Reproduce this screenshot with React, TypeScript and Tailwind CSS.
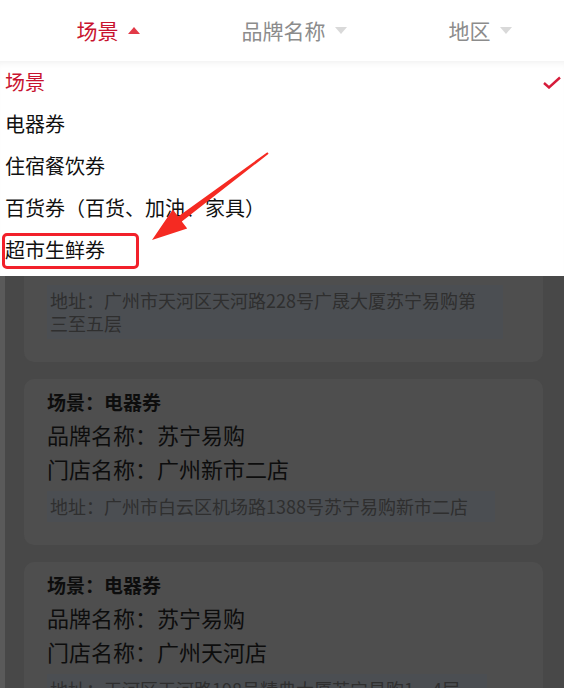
import React from 'react';

interface Store {
  scene: string;
  brand: string;
  store: string;
  address: string;
}

const stores: Store[] = [
  {
    scene: '电器券',
    brand: '苏宁易购',
    store: '广州天河店',
    address: '地址：广州市天河区天河路228号广晟大厦苏宁易购第三至五层',
  },
  {
    scene: '电器券',
    brand: '苏宁易购',
    store: '广州新市二店',
    address: '地址：广州市白云区机场路1388号苏宁易购新市二店',
  },
  {
    scene: '电器券',
    brand: '苏宁易购',
    store: '广州天河店',
    address: '地址：天河区天河路198号精典大厦苏宁易购1、4层',
  },
];

const options = ['场景', '电器券', '住宿餐饮券', '百货券（百货、加油、家具）', '超市生鲜券'];

function Caret({ up }: { up?: boolean }) {
  return (
    <svg width="12" height="7" viewBox="0 0 12 7" className="ml-[9px]">
      {up ? (
        <polygon points="6,0 12,7 0,7" fill="#e23a47" />
      ) : (
        <polygon points="0,0 12,0 6,7" fill="#d9d9d9" />
      )}
    </svg>
  );
}

export default function App() {
  return (
    <div
      className="relative w-[564px] h-[688px] overflow-hidden bg-[#484848]"
      style={{ fontFamily: '"Noto Sans CJK SC", "Noto Sans", sans-serif' }}
    >
      {/* 顶部筛选栏 */}
      <div className="relative z-20 h-[61px] bg-white grid grid-cols-[186px_186px_186px] pl-[15px] items-center">
        <div className="flex items-center justify-center text-[21px] text-[#c8132f]">
          场景
          <Caret up />
        </div>
        <div className="flex items-center justify-center text-[21px] text-[#8c8c8c]">
          品牌名称
          <Caret />
        </div>
        <div className="flex items-center justify-center text-[21px] text-[#8c8c8c]">
          地区
          <Caret />
        </div>
      </div>

      {/* 门店列表（被遮罩） */}
      <div className="border-l-[5px] border-[#5a5a5a] h-full pt-[112px] pl-[19px] pr-[21px] flex flex-col gap-[17px]">
        {stores.map((s, i) => (
          <div key={i} className="bg-[#4e4e4e] rounded-[10px] pt-[11px] pb-[23px] pl-[23px] pr-[20px] text-[#0d0d0d]">
            <div className="text-[19px] leading-[24px] font-bold">场景：{s.scene}</div>
            <div className="mt-[3px] text-[22px] leading-[34px]">品牌名称：{s.brand}</div>
            <div className="text-[22px] leading-[34px]">门店名称：{s.store}</div>
            <div className="mt-[6px] w-fit max-w-[456px] bg-[#4b4e52] pl-[3px] pr-[27px] py-[4px] text-[18px] leading-[23px] text-[#2f2f2f]">
              {s.address}
            </div>
          </div>
        ))}
      </div>

      {/* 下拉菜单 */}
      <div className="absolute z-10 left-0 right-0 top-[61px] bg-white pb-[5px] shadow-[inset_0_6px_6px_-4px_rgba(0,0,0,0.06)]">
        {options.map((o, i) => (
          <div
            key={o}
            className={`h-[42px] flex items-center justify-between pl-[5px] pr-[3px] text-[20px] ${
              i === 0 ? 'text-[#c8132f]' : 'text-[#111]'
            }`}
          >
            <span>{o}</span>
            {i === 0 && (
              <svg width="18" height="13" viewBox="0 0 18 13">
                <polyline points="1,7 6,11.5 17,1.5" fill="none" stroke="#d61c3a" strokeWidth="2.4" />
              </svg>
            )}
          </div>
        ))}
      </div>

      {/* 标注：红框 + 箭头 */}
      <div className="absolute z-30 left-[2px] top-[233px] w-[137px] h-[36px] border-[3px] border-[#f2202a] rounded-[5px]" />
      <svg className="absolute z-30 left-0 top-0 pointer-events-none" width="564" height="688">
        <polygon
          points="268.6,153.8 181.8,221.4 187.2,228.6 152,240 172.8,209.4 178.2,216.6 267.4,152.2"
          fill="#f52a22"
        />
      </svg>
    </div>
  );
}
